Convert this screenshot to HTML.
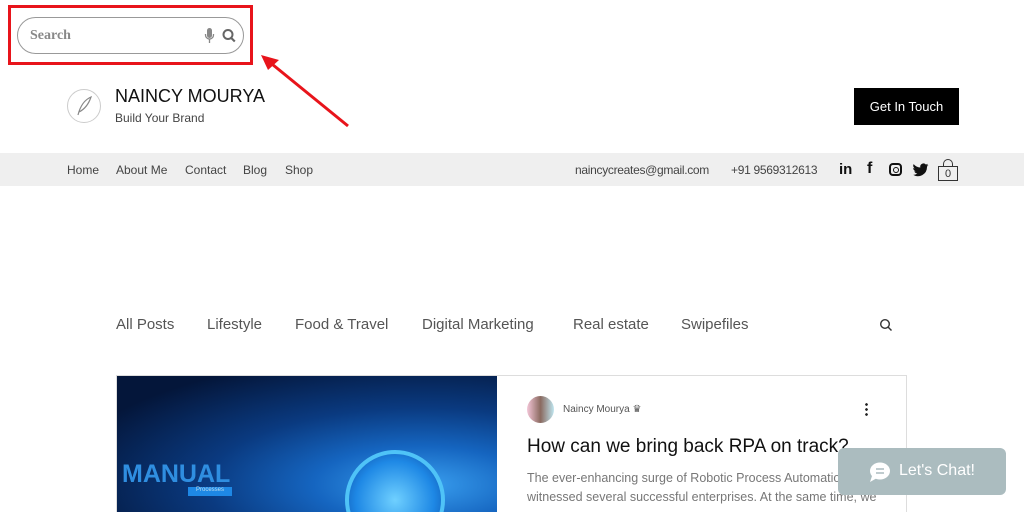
<!DOCTYPE html>
<html><head><style>
*{margin:0;padding:0;box-sizing:border-box}
html,body{width:1024px;height:512px;overflow:hidden}
body{background:#fff;font-family:"Liberation Sans",sans-serif;position:relative;color:#222}
.a{position:absolute}
.nav span{position:absolute;top:163px;font-size:12px;color:#444}
.cat{position:absolute;top:316px;font-size:15px;color:#555}
</style></head><body>
<div class="a" style="left:8px;top:5px;width:245px;height:60px;border:3px solid #e8141b"></div>
<div class="a" style="left:17px;top:17px;width:227px;height:37px;border:1px solid #999;border-radius:19px"></div>
<div class="a" style="left:30px;top:28px;font-family:'Liberation Serif',serif;font-weight:bold;font-size:14px;color:#888">Search</div>
<svg class="a" style="left:203px;top:27px" width="36" height="18" viewBox="0 0 36 18">
<rect x="4" y="1" width="5" height="10" rx="2.5" fill="#888"/><path d="M2.5 7v1a4 4 0 0 0 8 0V7M6.5 12v4" stroke="#888" stroke-width="1.3" fill="none"/>
<circle cx="25" cy="7.5" r="4.5" stroke="#666" stroke-width="2" fill="none"/><path d="M28.3 11l3.5 3.5" stroke="#666" stroke-width="2.2"/></svg>
<svg class="a" style="left:255px;top:50px" width="100" height="82"><path d="M93 76L12 10" stroke="#e8141b" stroke-width="3"/><path d="M6 5L24 10L13 20Z" fill="#e8141b"/></svg>
<div class="a" style="left:67px;top:89px;width:34px;height:34px;border:1px solid #ccc;border-radius:50%"></div>
<svg class="a" style="left:74px;top:95px" width="20" height="22"><path d="M4 20C6 12 10 5 17 2C15 8 11 14 5 17" stroke="#888" fill="none" stroke-width="1.2"/></svg>
<div class="a" style="left:115px;top:86px;font-size:18px;color:#111">NAINCY MOURYA</div>
<div class="a" style="left:115px;top:111px;font-size:12px;color:#444">Build Your Brand</div>
<div class="a" style="left:854px;top:88px;width:105px;height:37px;background:#000;color:#fff;font-size:13px;text-align:center;line-height:37px">Get In Touch</div>
<div class="a" style="left:0;top:153px;width:1024px;height:33px;background:#efefef"></div>
<div class="nav"><span style="left:67px">Home</span><span style="left:116px">About Me</span><span style="left:185px">Contact</span><span style="left:243px">Blog</span><span style="left:285px">Shop</span><span style="left:575px;letter-spacing:-0.3px">naincycreates@gmail.com</span><span style="left:731px;letter-spacing:-0.3px">+91 9569312613</span></div>
<div class="a" style="left:839px;top:161px;font-size:15px;font-weight:bold;color:#111">in</div>
<div class="a" style="left:867px;top:160px;font-size:16px;font-weight:bold;color:#111">f</div>
<div class="a" style="left:889px;top:163px;width:13px;height:13px;border:2px solid #111;border-radius:4px"><div style="margin:1.5px;width:6px;height:6px;border:1.5px solid #111;border-radius:50%"></div></div>
<svg class="a" style="left:913px;top:163px" width="16" height="14" viewBox="0 0 24 20"><path d="M23 2.5c-.9.4-1.8.6-2.8.8 1-.6 1.8-1.5 2.1-2.7-.9.6-2 1-3.1 1.2A4.8 4.8 0 0 0 11 6.2 13.7 13.7 0 0 1 1 1.1a4.8 4.8 0 0 0 1.5 6.5c-.8 0-1.5-.2-2.2-.6 0 2.3 1.7 4.3 3.9 4.8-.7.2-1.5.2-2.2.1a4.8 4.8 0 0 0 4.5 3.3A9.7 9.7 0 0 1 0 17.2 13.7 13.7 0 0 0 21 5.7V5c.8-.7 1.5-1.4 2-2.5z" fill="#111"/></svg>
<div class="a" style="left:938px;top:166px;width:20px;height:15px;border:1px solid #333;font-size:11px;text-align:center;line-height:14px;color:#333">0</div>
<div class="a" style="left:943px;top:159px;width:10px;height:8px;border:1px solid #333;border-bottom:none;border-radius:5px 5px 0 0"></div>
<div class="cat" style="left:116px">All Posts</div><div class="cat" style="left:207px">Lifestyle</div><div class="cat" style="left:295px">Food &amp; Travel</div><div class="cat" style="left:422px">Digital Marketing</div><div class="cat" style="left:573px">Real estate</div><div class="cat" style="left:681px">Swipefiles</div>
<svg class="a" style="left:879px;top:318px" width="14" height="14"><circle cx="6" cy="6" r="4.3" stroke="#333" stroke-width="1.4" fill="none"/><path d="M9 9l3.5 3.5" stroke="#333" stroke-width="1.5"/></svg>
<div class="a" style="left:116px;top:375px;width:791px;height:137px;border:1px solid #ddd;border-bottom:none"></div>
<div class="a" style="left:117px;top:376px;width:380px;height:136px;overflow:hidden;background:radial-gradient(ellipse at 80% 80%,#3aa0f0 0%,#1565c0 25%,#0a3a80 50%,#04163a 85%)">
<div class="a" style="left:228px;top:74px;width:100px;height:100px;border-radius:50%;background:radial-gradient(circle,#6fd0ff,#1e88e5 60%,#0d47a1);border:4px solid #4fc3f7"></div>
<div class="a" style="left:5px;top:84px;font-size:25px;font-weight:bold;color:#2f8ee0">MANUAL</div>
<div class="a" style="left:71px;top:111px;width:44px;height:9px;background:#1e88e5;font-size:6px;color:#bde;text-align:center">Processes</div>
</div>
<div class="a" style="left:527px;top:396px;width:27px;height:27px;border-radius:50%;background:linear-gradient(90deg,#f4c6d8,#8a6a60 50%,#bfe6f0)"></div>
<div class="a" style="left:563px;top:404px;font-size:10px;color:#555">Naincy Mourya ♛</div>
<div class="a" style="left:865px;top:402px;width:3px;height:14px;background:radial-gradient(circle,#222 1.2px,transparent 1.5px) 0 0/3px 5px"></div>
<div class="a" style="left:527px;top:436px;font-size:19px;color:#111">How can we bring back RPA on track?</div>
<div class="a" style="left:527px;top:469px;font-size:12.5px;color:#777;line-height:19px;width:360px;height:43px;overflow:hidden">The ever-enhancing surge of Robotic Process Automation has witnessed several successful enterprises. At the same time, we</div>
<div class="a" style="left:838px;top:448px;width:168px;height:47px;background:#abbcbf;border-radius:6px"></div>
<svg class="a" style="left:868px;top:461px" width="24" height="22"><ellipse cx="12" cy="10" rx="10" ry="8.5" fill="#fff"/><path d="M4 15l-2 6 7-4z" fill="#fff"/><path d="M8 8h8M8 12h8" stroke="#abbcbf" stroke-width="1.6"/></svg>
<div class="a" style="left:899px;top:462px;font-size:16px;color:#fff">Let's Chat!</div>
</body></html>
